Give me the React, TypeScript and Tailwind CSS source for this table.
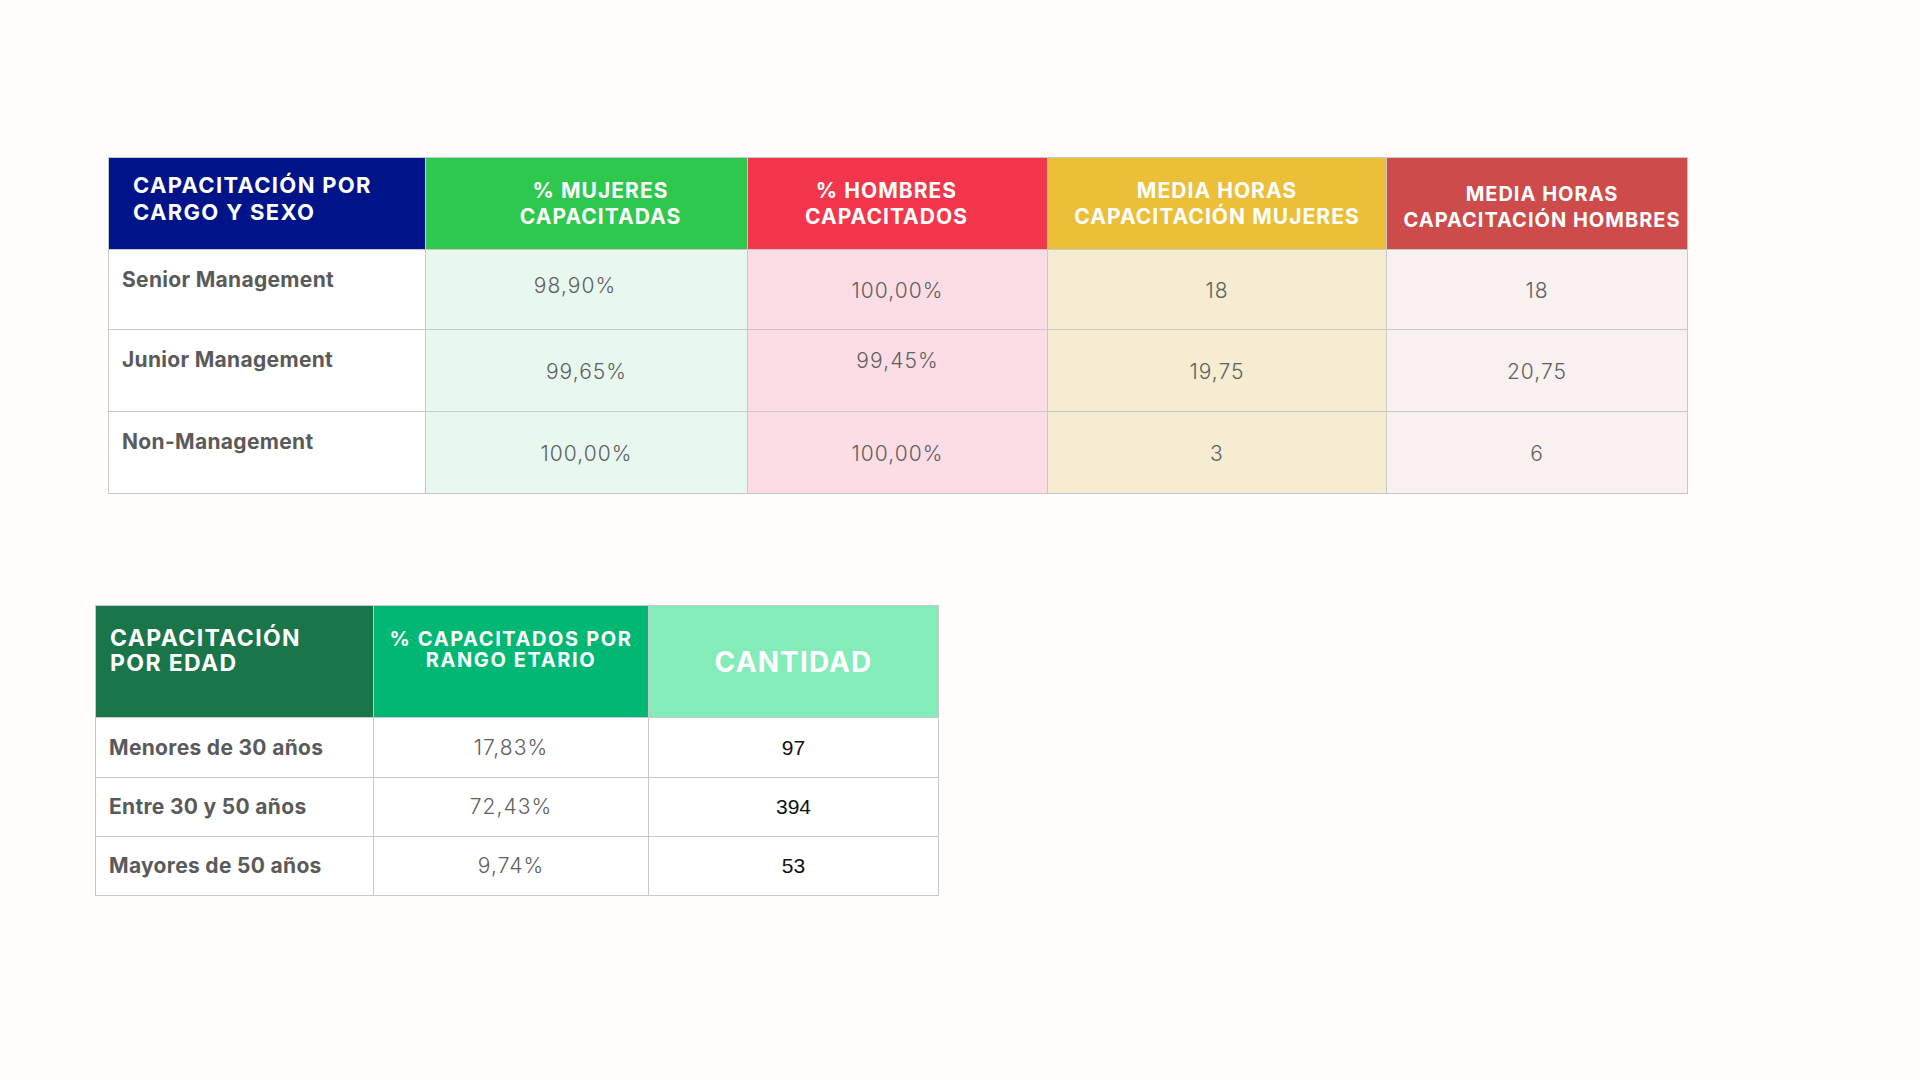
import React from 'react';

// Types
interface CargoRow {
  label: string;
  values: { text: string; cls: string }[];
}

interface EdadRow {
  label: string;
  pct: string;
  qty: string;
}

const cargoRows: CargoRow[] = [
  {
    label: 'Senior Management',
    values: [
      { text: '98,90%', cls: 'bg-[#e8f8ef] pb-[8px] pr-[23px]' },
      { text: '100,00%', cls: 'bg-[#fddde5] pt-[2px]' },
      { text: '18', cls: 'bg-[#f5ecd1] pt-[2px]' },
      { text: '18', cls: 'bg-[#f9f0f0] pt-[2px]' },
    ],
  },
  {
    label: 'Junior Management',
    values: [
      { text: '99,65%', cls: 'bg-[#e8f8ef] pt-[2px]' },
      { text: '99,45%', cls: 'bg-[#fddde5] pb-[20px]' },
      { text: '19,75', cls: 'bg-[#f5ecd1] pt-[2px]' },
      { text: '20,75', cls: 'bg-[#f9f0f0] pt-[2px]' },
    ],
  },
  {
    label: 'Non-Management',
    values: [
      { text: '100,00%', cls: 'bg-[#e8f8ef] pt-[2px]' },
      { text: '100,00%', cls: 'bg-[#fddde5] pt-[2px]' },
      { text: '3', cls: 'bg-[#f5ecd1] pt-[2px]' },
      { text: '6', cls: 'bg-[#f9f0f0] pt-[2px]' },
    ],
  },
];

const edadRows: EdadRow[] = [
  { label: 'Menores de 30 años', pct: '17,83%', qty: '97' },
  { label: 'Entre 30 y 50 años', pct: '72,43%', qty: '394' },
  { label: 'Mayores de 50 años', pct: '9,74%', qty: '53' },
];

const cell = 'border-r border-b border-[#c8c8c8]';
const head = 'text-white font-bold uppercase';
const valueText = 'text-[21px] font-light tracking-[0.05em] text-[#606060]';
const labelText = 'text-[21px] font-bold tracking-[0.015em] text-[#5a5a5a]';

const App: React.FC = () => {
  return (
    <div className="min-h-screen w-full bg-[#fefdfc] font-['Inter',sans-serif]">
      <div className="flex flex-col items-start pt-[157px]">
        {/* Capacitación por cargo y sexo */}
        <div className="ml-[108px] grid grid-cols-[317px_322px_300px_339px_301px] grid-rows-[92px_80px_82px_82px] border-l border-t border-[#c8c8c8]">
          <div className={`${cell} ${head} bg-[#00148a] pl-[24px] pt-[14px] text-[22px] leading-[27px] tracking-[0.06em]`}>
            Capacitación por
            <br />
            cargo y sexo
          </div>
          <div className={`${cell} ${head} bg-[#2ec84e] text-center pt-[20px] pl-[28px] text-[21px] leading-[26px] tracking-[0.05em]`}>
            % Mujeres
            <br />
            capacitadas
          </div>
          <div className={`${cell} ${head} bg-[#f4364c] text-center pt-[20px] pr-[22px] text-[21px] leading-[26px] tracking-[0.05em]`}>
            % Hombres
            <br />
            capacitados
          </div>
          <div className={`${cell} ${head} bg-[#ebbf38] text-center pt-[20px] text-[21px] leading-[26px] tracking-[0.05em]`}>
            Media horas
            <br />
            capacitación mujeres
          </div>
          <div className={`${cell} ${head} bg-[#cd4b4b] text-center pt-[23px] pl-[10px] text-[20px] leading-[26px] tracking-[0.05em]`}>
            Media horas
            <br />
            capacitación hombres
          </div>

          {cargoRows.map((row) => (
            <React.Fragment key={row.label}>
              <div className={`${cell} ${labelText} bg-white pl-[13px] pt-[17px] leading-[25px]`}>{row.label}</div>
              {row.values.map((v, j) => (
                <div key={j} className={`${cell} ${v.cls} ${valueText} flex items-center justify-center`}>
                  {v.text}
                </div>
              ))}
            </React.Fragment>
          ))}
        </div>

        {/* Capacitación por edad */}
        <div className="ml-[95px] mt-[111px] grid grid-cols-[278px_275px_290px] grid-rows-[112px_60px_59px_59px] border-l border-t border-[#c8c8c8]">
          <div className={`${cell} ${head} bg-[#1a754a] pl-[14px] pt-[20px] text-[23px] leading-[25px] tracking-[0.06em]`}>
            Capacitación
            <br />
            por edad
          </div>
          <div className={`${cell} ${head} bg-[#00b874] text-center pt-[23px] text-[20px] leading-[21px] tracking-[0.08em]`}>
            % Capacitados por
            <br />
            rango etario
          </div>
          <div className={`${cell} ${head} bg-[#84ecb8] flex items-center justify-center text-[28px] tracking-[0.04em]`}>
            Cantidad
          </div>

          {edadRows.map((row) => (
            <React.Fragment key={row.label}>
              <div className={`${cell} ${labelText} bg-white flex items-center pl-[13px]`}>{row.label}</div>
              <div className={`${cell} ${valueText} bg-white flex items-center justify-center`}>{row.pct}</div>
              <div className={`${cell} bg-white flex items-center justify-center text-[21px] text-[#111] font-['Liberation_Sans',Arial,sans-serif]`}>
                {row.qty}
              </div>
            </React.Fragment>
          ))}
        </div>
      </div>
    </div>
  );
};

export default App;
